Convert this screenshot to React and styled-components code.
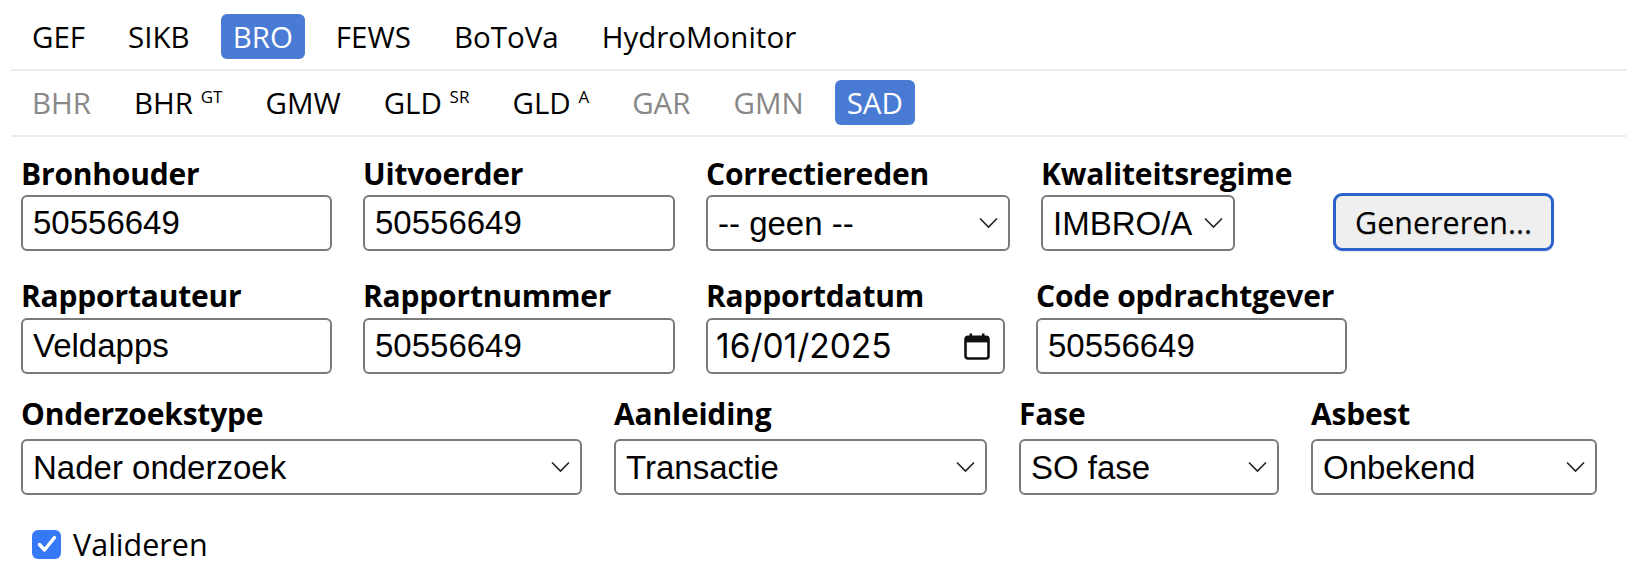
import React from 'react';
import styled, { createGlobalStyle } from 'styled-components';

const GlobalStyle = createGlobalStyle`
  body {
    margin: 0;
    background: #fff;
    color: #000;
    font-family: "Open Sans", "Noto Sans", sans-serif;
  }
`;

const topTabs = [
  { t: 'GEF' },
  { t: 'SIKB' },
  { t: 'BRO', active: true },
  { t: 'FEWS' },
  { t: 'BoToVa' },
  { t: 'HydroMonitor' },
];

const subTabs = [
  { t: 'BHR', muted: true },
  { t: 'BHR', sup: 'GT' },
  { t: 'GMW' },
  { t: 'GLD', sup: 'SR' },
  { t: 'GLD', sup: 'A' },
  { t: 'GAR', muted: true },
  { t: 'GMN', muted: true },
  { t: 'SAD', active: true },
];

function Chevron() {
  return (
    <ChevronIcon width='19' height='11' viewBox='0 0 19 11'>
      <path d='M1 1 L9.5 9.5 L18 1' fill='none' stroke='#222' strokeWidth='1.6' />
    </ChevronIcon>
  );
}

function CalendarIcon() {
  return (
    <CalIcon width='26' height='27' viewBox='0 0 26 27'>
      <rect x='5.5' y='0.5' width='2.6' height='5' fill='#111' />
      <rect x='17.9' y='0.5' width='2.6' height='5' fill='#111' />
      <rect x='1.5' y='3.8' width='23' height='21.7' rx='2.5' fill='none' stroke='#111' strokeWidth='2.6' />
      <rect x='1.5' y='3.8' width='23' height='5.6' fill='#111' />
    </CalIcon>
  );
}

function SelectBox({ w, value }) {
  return (
    <SelectWrap $w={w}>
      <Select defaultValue={value}>
        <option>{value}</option>
      </Select>
      <Chevron />
    </SelectWrap>
  );
}

function TabRow({ items }) {
  return (
    <TabBar>
      {items.map((it, i) => (
        <Tab key={i} $active={it.active} $muted={it.muted}>
          {it.t}
          {it.sup && (
            <>
              {' '}
              <Sup>{it.sup}</Sup>
            </>
          )}
        </Tab>
      ))}
    </TabBar>
  );
}

export default function App() {
  return (
    <Page>
      <GlobalStyle />
      <TabRow items={topTabs} />
      <TabRow items={subTabs} />

      <Form>
        <FieldRow>
          <Field>
            <Label>Bronhouder</Label>
            <TextInput $w={311} defaultValue='50556649' />
          </Field>
          <Field>
            <Label>Uitvoerder</Label>
            <TextInput $w={312} defaultValue='50556649' />
          </Field>
          <Field>
            <Label>Correctiereden</Label>
            <SelectBox w={304} value='-- geen --' />
          </Field>
          <Field $w={260}>
            <Label>Kwaliteitsregime</Label>
            <SelectBox w={194} value='IMBRO/A' />
          </Field>
          <Field>
            <Button type='button'>Genereren...</Button>
          </Field>
        </FieldRow>

        <FieldRow $top={28}>
          <Field>
            <Label $gap={5}>Rapportauteur</Label>
            <TextInput $w={311} defaultValue='Veldapps' />
          </Field>
          <Field>
            <Label $gap={5}>Rapportnummer</Label>
            <TextInput $w={312} defaultValue='50556649' />
          </Field>
          <Field>
            <Label $gap={5}>Rapportdatum</Label>
            <DateBox>
              <DateText readOnly value='16/01/2025' />
              <CalendarIcon />
            </DateBox>
          </Field>
          <Field>
            <Label $gap={5}>Code opdrachtgever</Label>
            <TextInput $w={311} defaultValue='50556649' />
          </Field>
        </FieldRow>

        <FieldRow $top={23} $gapX={32}>
          <Field>
            <Label $gap={8}>Onderzoekstype</Label>
            <SelectBox w={561} value='Nader onderzoek' />
          </Field>
          <Field>
            <Label $gap={8}>Aanleiding</Label>
            <SelectBox w={373} value='Transactie' />
          </Field>
          <Field>
            <Label $gap={8}>Fase</Label>
            <SelectBox w={260} value='SO fase' />
          </Field>
          <Field>
            <Label $gap={8}>Asbest</Label>
            <SelectBox w={286} value='Onbekend' />
          </Field>
        </FieldRow>

        <CheckRow>
          <CheckBox>
            <svg width='20' height='18' viewBox='0 0 20 18'>
              <path d='M2.5 9.5 L7.5 15 L17.5 2.5' fill='none' stroke='#fff' strokeWidth='3.4' strokeLinecap='round' strokeLinejoin='round' />
            </svg>
          </CheckBox>
          <CheckLabel>Valideren</CheckLabel>
        </CheckRow>
      </Form>
    </Page>
  );
}

const Page = styled.div`
  width: 1626px;
  height: 576px;
  overflow: hidden;
`;

const TabBar = styled.div`
  display: flex;
  gap: 19px;
  margin-left: 11px;
  padding: 14px 9px 10px;
  border-bottom: 2px solid #ececec;

  & + & {
    padding-top: 9px;
  }
`;

const Tab = styled.div`
  height: 45px;
  line-height: 45px;
  padding: 0 12px;
  border-radius: 6px;
  font-size: 29.5px;
  white-space: nowrap;
  color: ${(p) => (p.$active ? '#fff' : p.$muted ? '#888' : '#000')};
  background: ${(p) => (p.$active ? '#4a7bd4' : 'transparent')};
`;

const Sup = styled.span`
  font-size: 17px;
  vertical-align: 11px;
  line-height: 0;
`;

const Form = styled.div`
  padding: 20px 0 0 21px;
`;

const FieldRow = styled.div`
  display: flex;
  align-items: flex-end;
  gap: ${(p) => p.$gapX || 31}px;
  margin-top: ${(p) => p.$top || 0}px;
`;

const Field = styled.div`
  display: flex;
  flex-direction: column;
  align-items: flex-start;
  width: ${(p) => (p.$w ? `${p.$w}px` : 'auto')};
`;

const Label = styled.label`
  display: block;
  font-size: 30px;
  font-weight: 700;
  line-height: 34px;
  letter-spacing: -0.2px;
  white-space: nowrap;
  margin-bottom: ${(p) => p.$gap || 4}px;
`;

const TextInput = styled.input`
  box-sizing: border-box;
  width: ${(p) => p.$w}px;
  height: 56px;
  padding: 0 10px;
  border: 2px solid #7a7a7a;
  border-radius: 6px;
  background: #fff;
  color: #000;
  font-family: "Liberation Sans", Arial, sans-serif;
  font-size: 33px;
  outline: none;
`;

const SelectWrap = styled.div`
  position: relative;
  width: ${(p) => p.$w}px;
`;

const Select = styled.select`
  appearance: none;
  -webkit-appearance: none;
  box-sizing: border-box;
  width: 100%;
  height: 56px;
  padding: 0 40px 0 10px;
  border: 2px solid #7a7a7a;
  border-radius: 6px;
  background: #fff;
  color: #000;
  font-family: "Liberation Sans", Arial, sans-serif;
  font-size: 33px;
  outline: none;
`;

const ChevronIcon = styled.svg`
  position: absolute;
  right: 12px;
  top: 50%;
  transform: translateY(-50%);
  pointer-events: none;
`;

const DateBox = styled.div`
  box-sizing: border-box;
  display: flex;
  align-items: center;
  width: 299px;
  height: 56px;
  padding: 0 13px 0 8px;
  border: 2px solid #7a7a7a;
  border-radius: 6px;
  background: #fff;
`;

const DateText = styled.input`
  flex: 1;
  min-width: 0;
  border: none;
  outline: none;
  padding: 0;
  background: transparent;
  color: #000;
  font-family: Inter, "Liberation Sans", sans-serif;
  font-size: 33.5px;
`;

const CalIcon = styled.svg`
  flex: none;
`;

const Button = styled.button`
  box-sizing: border-box;
  width: 221px;
  height: 58px;
  margin-left: 1px;
  padding: 0;
  border: 3px solid #2b63cb;
  border-radius: 9px;
  background: #efefef;
  color: #000;
  font-family: "Open Sans", "Noto Sans", sans-serif;
  font-size: 30.5px;
  text-shadow: 0 1px 1px rgba(0, 0, 0, 0.18);
  box-shadow: 0 2px 2px rgba(0, 0, 0, 0.06);
  cursor: pointer;
`;

const CheckRow = styled.div`
  display: flex;
  align-items: center;
  gap: 12px;
  margin: 32px 0 0 11px;
`;

const CheckBox = styled.span`
  display: flex;
  align-items: center;
  justify-content: center;
  width: 29px;
  height: 29px;
  border-radius: 6px;
  background: #3579f6;
`;

const CheckLabel = styled.span`
  font-size: 30.5px;
  line-height: 34px;
`;
